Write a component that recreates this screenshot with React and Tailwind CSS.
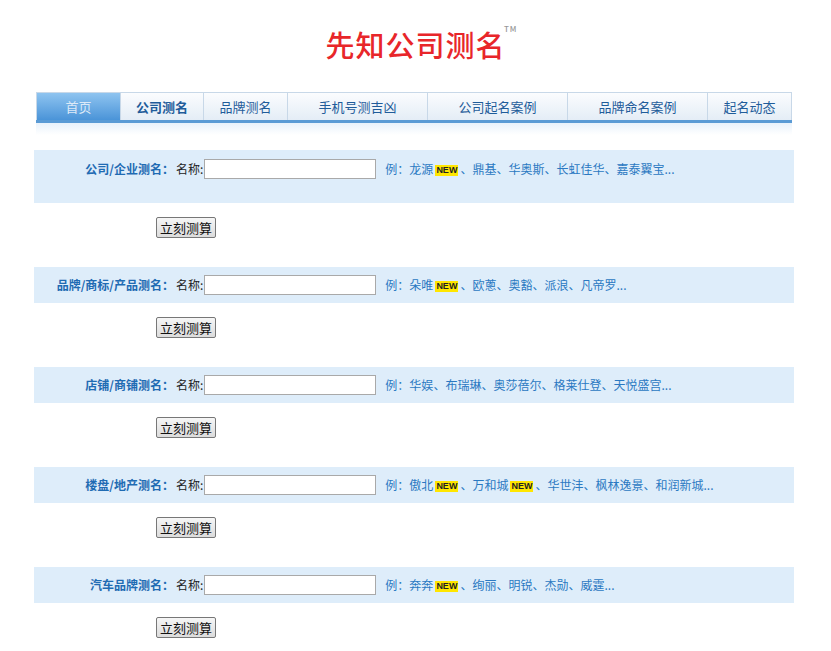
const F = { fontFamily: '"Noto Sans CJK SC", "Liberation Sans", sans-serif' };
const tabs = [
  ["首页", 85], ["公司测名", 83], ["品牌测名", 84], ["手机号测吉凶", 140],
  ["公司起名案例", 140], ["品牌命名案例", 140], ["起名动态", 84],
];
const New = () => (
  <span className="inline-block bg-[#ffe600] text-[#222] text-[9px] font-bold leading-[11px] px-[1px] mx-[2px] align-middle" style={{ fontFamily: '"Liberation Sans", sans-serif' }}>NEW</span>
);
const sections = [
  { label: "公司/企业测名：", ex: [["龙源", 1], ["鼎基"], ["华奥斯"], ["长虹佳华"], ["嘉泰翼宝..."]], tall: true },
  { label: "品牌/商标/产品测名：", ex: [["朵唯", 1], ["欧蔥"], ["奥豁"], ["派浪"], ["凡帝罗..."]] },
  { label: "店铺/商铺测名：", ex: [["华娱"], ["布瑞琳"], ["奥莎蓓尔"], ["格莱仕登"], ["天悦盛宫..."]] },
  { label: "楼盘/地产测名：", ex: [["傲北", 1], ["万和城", 1], ["华世沣"], ["枫林逸景"], ["和润新城..."]] },
  { label: "汽车品牌测名：", ex: [["奔奔", 1], ["绚丽"], ["明锐"], ["杰勋"], ["威霆..."]] },
];
export default function App() {
  return (
    <div className="w-[831px] h-[651px] bg-white overflow-hidden text-[12px]" style={F}>
      <div className="h-[92px] flex justify-center items-start pt-[24px]">
        <div className="relative text-[#e8262a] text-[29px] leading-[40px] font-medium tracking-[1px]">
          先知公司测名
          <span className="absolute -right-[12px] top-[1px] text-[8px] leading-[8px] text-[#999]">TM</span>
        </div>
      </div>
      <div className="ml-[36px] w-[756px]">
        <div className="flex h-[28px]">
          {tabs.map(([t, w], i) => (
            <div key={t} style={{ width: w }}
              className={`flex items-center justify-center text-[13px] border-t border-r border-[#c8d8e8] ${i === 0 ? "bg-gradient-to-b from-[#8ec4f0] to-[#4a94d8] text-[#dce9f7] border-l" : "bg-gradient-to-b from-[#fbfcfe] to-[#e4edf6] text-[#1f5c9a]"} ${i === 1 ? "font-bold text-[#1c4777]" : ""}`}>
              {t}
            </div>
          ))}
        </div>
        <div className="h-[3px] bg-[#5b9bd5]" />
        <div className="h-[12px] bg-gradient-to-b from-[#e9f2fb] to-white" />
      </div>
      <div className="ml-[34px] w-[760px] mt-[15px]">
        {sections.map((s, i) => (
          <div key={i} className={i === 0 ? "" : "mt-[29px]"}>
            <div className={`bg-[#deedfa] flex items-center ${s.tall ? "h-[53px] items-start pt-[9px]" : "h-[36px]"}`}>
              <div className="w-[140px] text-right font-bold text-[#1f6bb3] shrink-0 leading-[20px]">{s.label}</div>
              <span className="text-[#222] ml-[2px] leading-[20px]">名称:</span>
              <input className="ml-[1px] w-[172px] h-[20px] bg-white border border-[#a9a9a9] outline-none" />
              <span className="ml-[9px] text-[#2b79c2] leading-[20px]">
                例：{s.ex.map(([n, nw], j) => (
                  <span key={j}>{j > 0 ? "、" : ""}{n}{nw ? <New /> : null}</span>
                ))}
              </span>
            </div>
            <div className="mt-[14px] pl-[122px]">
              <button className="h-[21px] px-[3px] text-[13px] leading-[19px] text-[#111] bg-gradient-to-b from-[#f6f6f6] to-[#dcdcdc] border border-[#777] rounded-[2px]">立刻测算</button>
            </div>
          </div>
        ))}
      </div>
    </div>
  );
}
